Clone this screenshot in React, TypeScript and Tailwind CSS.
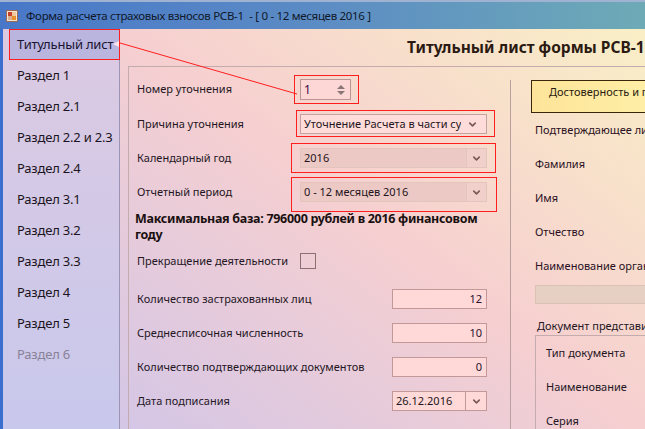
import { ChevronDown } from 'lucide-react';
import type { ReactNode } from 'react';

const sections = [
  'Титульный лист',
  'Раздел 1',
  'Раздел 2.1',
  'Раздел 2.2 и 2.3',
  'Раздел 2.4',
  'Раздел 3.1',
  'Раздел 3.2',
  'Раздел 3.3',
  'Раздел 4',
  'Раздел 5',
  'Раздел 6',
];

function AppIcon() {
  return (
    <svg width="12" height="12" viewBox="0 0 12 12" aria-hidden>
      <rect x="0.5" y="0.5" width="11" height="11" fill="#f3e6d8" stroke="#9a6a50" />
      <rect x="2" y="2" width="4" height="4" fill="#c8402a" />
      <rect x="6" y="6" width="4" height="4" fill="#e8902a" />
      <rect x="6" y="2" width="4" height="4" fill="#f0c8a0" />
      <rect x="2" y="6" width="4" height="4" fill="#d8b090" />
    </svg>
  );
}

/** red annotation frame drawn over a control */
function Marked({ className, children }: { className: string; children: ReactNode }) {
  return (
    <div className="relative">
      {children}
      <span className={`pointer-events-none absolute border border-[#ff1e1e] ${className}`} />
    </div>
  );
}

function Chevron() {
  return <ChevronDown className="size-[11px] text-[#7a5a54]" strokeWidth={3.5} aria-hidden />;
}

function Combo({ value, disabled }: { value: string; disabled?: boolean }) {
  if (!disabled) {
    return (
      <div className="flex h-[20px] w-[187px] items-center justify-between border border-[#c4a2a2] bg-[#fddcda] pl-[3px] pr-[8px] text-[#241420]">
        <span className="overflow-hidden whitespace-nowrap">{value}</span>
        <Chevron />
      </div>
    );
  }
  return (
    <div className="flex h-[20px] w-[187px] border border-[#e2c6be] bg-[#f1d0cb] text-[#241420]">
      <div className="flex flex-1 items-center whitespace-nowrap border-r border-[#e2c6be] bg-[#edc9c5] pl-[3px]">{value}</div>
      <div className="flex w-[19px] items-center justify-center">
        <Chevron />
      </div>
    </div>
  );
}

function NumField({ value }: { value: string }) {
  return (
    <div className="flex h-[20px] w-[95px] shrink-0 items-center justify-end border border-[#c29898] bg-[#ffd9d8] pr-[4px] text-[#2a1030]">
      {value}
    </div>
  );
}

export default function App() {
  return (
    <div className="relative h-[429px] w-[645px] overflow-hidden font-['Noto_Sans',sans-serif] text-[11px] text-[#24161f]">
      {/* title bar */}
      <div className="h-[2px] bg-[#9fb2d2]" />
      <div className="flex h-[27px] items-center gap-[8px] bg-linear-to-r from-[#4877c8] via-[#5c8cc4] to-[#6eaab6] pl-[6px] text-[11.5px] tracking-[-0.3px] text-[#10182a]">
        <AppIcon />
        <span className="whitespace-nowrap">Форма расчета страховых взносов РСВ-1&nbsp; - [ 0 - 12 месяцев 2016 ]</span>
      </div>

      <div className="flex h-[400px]">
        {/* sidebar */}
        <nav className="relative z-10 w-[120px] shrink-0 whitespace-nowrap border-l-[3px] border-r border-l-[#3a6fd0] border-r-[#9c94b4] bg-linear-to-b from-[#dccae2] to-[#c8c8ec] pl-[6px] text-[13px] tracking-[-0.2px]">
          {sections.map((s, i) =>
            i === 0 ? (
              <div key={s} className="mr-[-1px] flex h-[31px] items-center border border-[#ff1e1e] bg-[#b9b5df] pl-[7px] text-[#1c1430]">
                {s}
              </div>
            ) : (
              <div key={s} className={`flex h-[31px] items-center pl-[8px] ${i === 10 ? 'text-[#8a8298]' : 'text-[#1c1420]'}`}>
                {s}
              </div>
            )
          )}
        </nav>

        {/* main */}
        <main className="flex min-w-0 flex-1 flex-col bg-linear-to-tr from-[#d4c6e6] via-[#f6cfd0] to-[#f9efc6] pl-[8px]">
          <div className="flex h-[37px] shrink-0 items-center overflow-hidden whitespace-nowrap pl-[279px] text-[15.5px] font-bold text-[#2a1a12]">
            Титульный лист формы РСВ-1
          </div>

          <div className="flex min-h-0 flex-1 border-l border-t border-[#c4acae]">
            {/* left panel */}
            <section className="flex w-[381px] shrink-0 flex-col whitespace-nowrap pl-[8px]">
              <div className="mt-[12px] flex h-[21px] items-center">
                <span className="w-[163px]">Номер уточнения</span>
                <Marked className="-bottom-[4px] -left-[6px] -right-[8px] -top-[4px]">
                  <div className="flex h-[21px] w-[51px] items-center justify-between border border-[#bb9494] bg-[#fdd6d6] pl-[3px] pr-[5px] text-[12px] text-[#3a0a48]">
                    <span>1</span>
                    <svg width="8" height="12" viewBox="0 0 8 12" aria-hidden>
                      <path d="M4 1 L8 5 H0 Z M0 7 H8 L4 11 Z" fill="#8a7676" />
                    </svg>
                  </div>
                </Marked>
              </div>
              <div className="mt-[14px] flex h-[20px] items-center">
                <span className="w-[163px]">Причина уточнения</span>
                <Marked className="-bottom-[3px] -left-[4px] -right-[8px] -top-[4px]">
                  <Combo value="Уточнение Расчета в части су" />
                </Marked>
              </div>
              <div className="mt-[14px] flex h-[20px] items-center">
                <span className="w-[163px]">Календарный год</span>
                <Marked className="-bottom-[5px] -left-[9px] -right-[9px] -top-[5px]">
                  <Combo value="2016" disabled />
                </Marked>
              </div>
              <div className="mt-[14px] flex h-[20px] items-center">
                <span className="w-[163px]">Отчетный период</span>
                <Marked className="-bottom-[10px] -left-[9px] -right-[10px] -top-[5px]">
                  <Combo value="0 - 12 месяцев 2016" disabled />
                </Marked>
              </div>

              <p className="mt-[9px] -ml-[2px] w-[345px] whitespace-normal text-[12.5px] font-bold leading-[16px] tracking-[-0.3px] text-[#1a1010]">
                Максимальная база: 796000 рублей в 2016 финансовом году
              </p>

              <div className="mt-[8px] flex h-[20px] items-center">
                <span className="w-[163px]">Прекращение деятельности</span>
                <span className="size-[16px] border border-[#8c7070]" />
              </div>

              <div className="mt-[18px] flex h-[20px] w-[350px] items-center justify-between">
                <span>Количество застрахованных лиц</span>
                <NumField value="12" />
              </div>
              <div className="mt-[14px] flex h-[20px] w-[350px] items-center justify-between">
                <span>Среднесписочная численность</span>
                <NumField value="10" />
              </div>
              <div className="mt-[14px] flex h-[20px] w-[350px] items-center justify-between">
                <span>Количество подтверждающих документов</span>
                <NumField value="0" />
              </div>
              <div className="mt-[14px] flex h-[20px] w-[350px] items-center justify-between">
                <span>Дата подписания</span>
                <div className="flex h-[20px] w-[95px] border border-[#c29898] bg-[#ffd9d8] text-[#241420]">
                  <div className="flex flex-1 items-center border-r border-[#c29898] pl-[3px]">26.12.2016</div>
                  <div className="flex w-[20px] items-center justify-center">
                    <Chevron />
                  </div>
                </div>
              </div>
            </section>

            {/* right panel */}
            <section className="mt-[13px] flex min-w-0 flex-1 flex-col overflow-hidden whitespace-nowrap border-l border-[#b8a0a0]">
              <div className="ml-[20px] h-[33px] w-[140px] shrink-0 overflow-hidden border border-[#3a2608] bg-linear-to-r from-[#fde49a] to-[#fff1a8] pl-[17px] pt-[3px] text-[#2a1a10]">
                Достоверность и п
              </div>
              {['Подтверждающее ли', 'Фамилия', 'Имя', 'Отчество', 'Наименование орган'].map((l) => (
                <div key={l} className="flex h-[34px] shrink-0 items-center pl-[24px] text-[#2a1022]">
                  {l}
                </div>
              ))}
              <div className="ml-[24px] mt-[2px] h-[19px] w-[140px] shrink-0 border border-[#dcc2b4] bg-[#e6d0c4]" />
              <div className="ml-[25px] mt-[14px] flex h-[17px] shrink-0 items-center pl-[1px] text-[#24161f]">Документ представи</div>
              <div className="ml-[24px] flex flex-1 flex-col border-l border-t border-[#c4acae] pl-[10px]">
                {['Тип документа', 'Наименование', 'Серия'].map((l) => (
                  <div key={l} className="flex h-[34px] shrink-0 items-center">
                    {l}
                  </div>
                ))}
              </div>
            </section>
          </div>
        </main>
      </div>

      {/* annotation arrow from the selected section to the spinner */}
      <svg className="pointer-events-none absolute left-0 top-0 z-20" width="645" height="429" aria-hidden>
        <path d="M113 44 L119 41 L119 47 Z" fill="#fbe4ea" />
        <line x1="120" y1="43" x2="297" y2="94" stroke="#ff1e1e" strokeWidth="1" />
      </svg>
    </div>
  );
}
